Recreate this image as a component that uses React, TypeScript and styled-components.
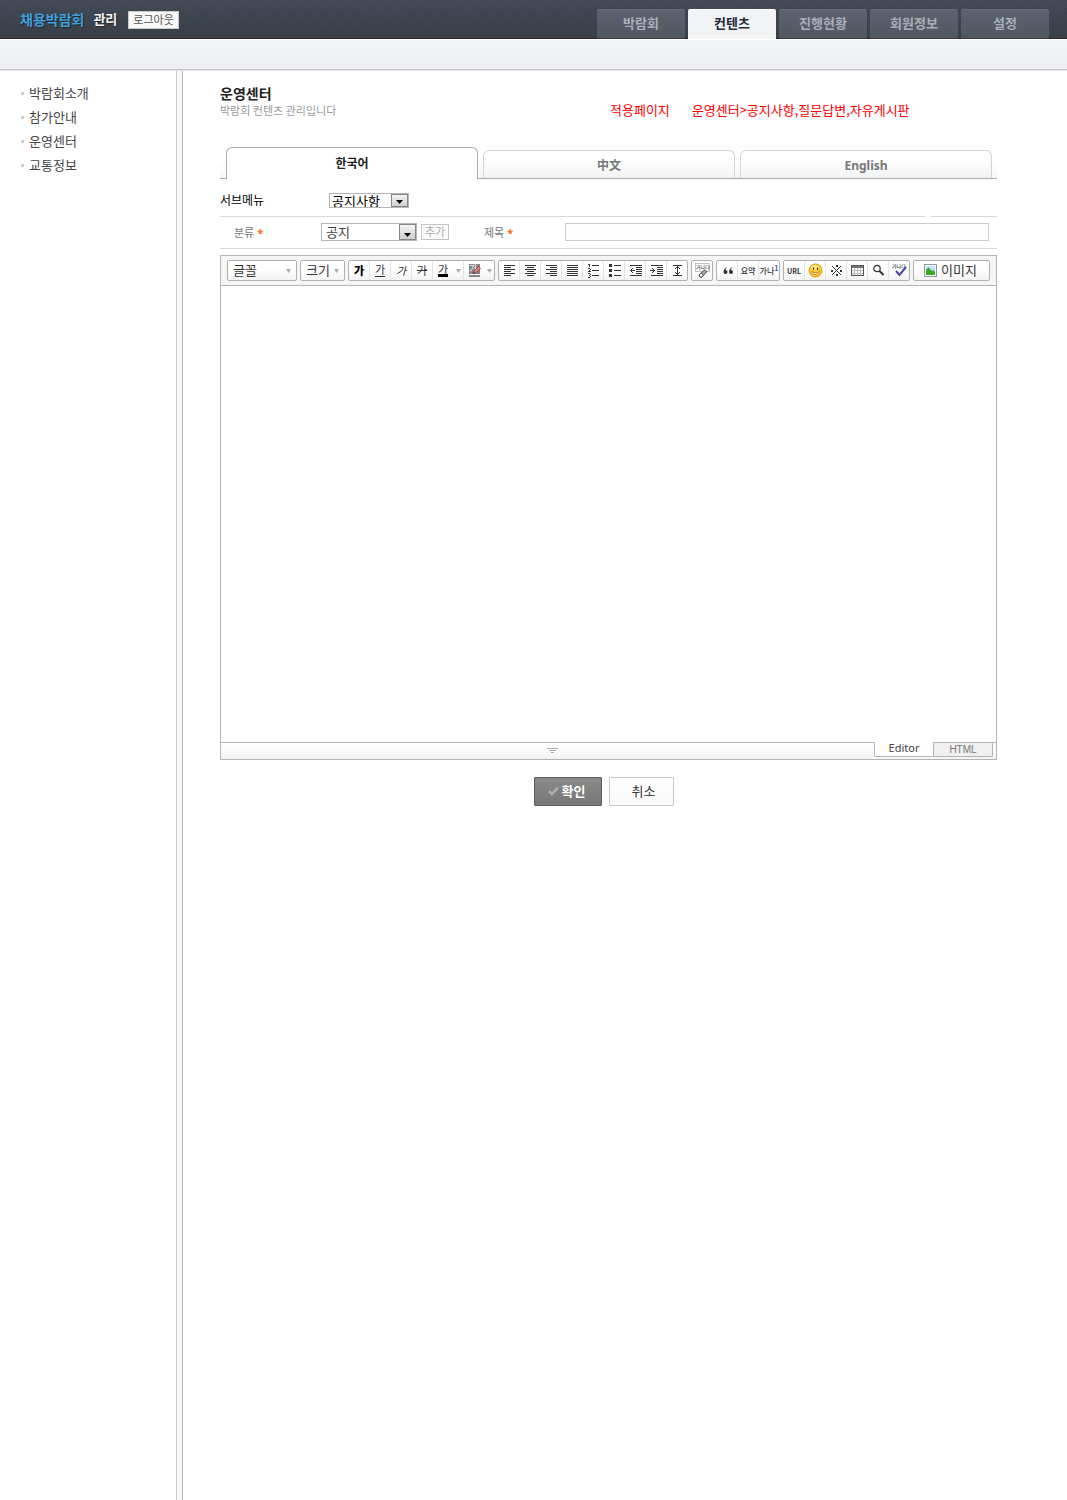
import React, { useState } from "react";
import styled, { createGlobalStyle, css } from "styled-components";

const GlobalStyle = createGlobalStyle`
  *, *::before, *::after { box-sizing: border-box; }
  body {
    margin: 0;
    background: #fff;
    color: #444;
    font-family: "Noto Sans CJK KR", sans-serif;
    font-size: 13px;
    line-height: 16px;
  }
  button, select, input, textarea { font: inherit; color: inherit; margin: 0; padding: 0; }
  ul { list-style: none; margin: 0; padding: 0; }
  h1, h2, p { margin: 0; }
`;

const Page = styled.div`
  display: flex;
  flex-direction: column;
  min-height: 100vh;
`;

const Header = styled.header`
  display: flex;
  justify-content: space-between;
  height: 39px;
  padding: 0 18px 0 20px;
  background:
    repeating-linear-gradient(45deg, rgba(0, 0, 0, 0.05) 0 1px, transparent 1px 3px),
    linear-gradient(#434b57, #3b4049);
  border-bottom: 1px solid #2b292c;
`;

const Brand = styled.div`
  display: flex;
  align-items: center;
  gap: 8px;
  height: 39px;
`;

const Logo = styled.h1`
  padding-bottom: 2px;
  font-size: 14px;
  font-weight: 700;
  line-height: 20px;
  color: #3f9fdc;
  text-shadow: 1px 1px 1px #22262d;
  display: flex;
  gap: 9px;
`;

const LogoSuffix = styled.span`
  font-size: 13px;
  color: #f2f2f2;
`;

const LogoutButton = styled.button`
  height: 18px;
  margin-left: 3px;
  padding: 0 4px 1px;
  font-size: 11px;
  line-height: 15px;
  color: #555;
  background: #f8f8f8;
  border: 1px solid #c9c9c9;
`;

const MainNav = styled.nav`
  display: flex;
  align-items: flex-end;
  gap: 3px;
  height: 39px;
`;

const NavTab = styled.a<{ $active?: boolean }>`
  width: 88px;
  height: 30px;
  padding-top: 5px;
  text-align: center;
  text-decoration: none;
  font-weight: 700;
  border-radius: 2px 2px 0 0;
  ${({ $active }) =>
    $active
      ? css`
          color: #1f2a3d;
          background: #f2f3f5;
          border-top: 1px solid #fff;
        `
      : css`
          color: #a9afba;
          background: linear-gradient(#5c636f, #505761);
          border-top: 1px solid #666d78;
          border-bottom: 1px solid #3a3d44;
        `}
`;

const SubBar = styled.div`
  height: 32px;
  background: linear-gradient(#f3f4f5, #edeef3);
  border-bottom: 1px solid #e2e2e6;
  box-shadow: inset 0 1px 0 #fff, inset 0 -1px 0 #c4c5cb;
`;

const Body = styled.div`
  display: flex;
  flex: 1;
`;

const Sidebar = styled.nav`
  flex: none;
  width: 183px;
  padding: 10px 0 0 21px;
  border-right: 1px solid #b5b5b5;
  background: linear-gradient(90deg, #ccc 1px, #f8f8f8 1px) right / 6px 100% no-repeat;
`;

const SideItem = styled.li`
  display: flex;
  align-items: center;
  gap: 5px;
  height: 24px;

  &::before {
    content: "";
    width: 3px;
    height: 3px;
    background: #ccc;
  }

  a { color: #444; text-decoration: none; }
`;

const Main = styled.main`
  flex: 1;
  min-width: 0;
  padding: 13px 70px 40px 37px;
`;

const TitleRow = styled.div`
  display: grid;
  grid-template-columns: 390px 1fr;
  align-items: end;
  height: 34px;
`;

const Title = styled.h2`
  font-size: 14px;
  font-weight: 700;
  line-height: 18px;
  color: #222;
`;

const Subtitle = styled.p`
  font-size: 11px;
  line-height: 16px;
  color: #999;
`;

const AppliedPages = styled.p`
  display: flex;
  gap: 22px;
  color: #f00;
`;

const LanguageTabs = styled.div`
  display: grid;
  grid-template-columns: repeat(3, 1fr);
  align-items: end;
  gap: 5px;
  height: 33px;
  margin-top: 28px;
  padding: 0 5px 0 6px;
  border-bottom: 1px solid #aaa;
  background: linear-gradient(#fff 50%, #f3f4f5);
`;

const LanguageTab = styled.button<{ $active: boolean }>`
  height: 28px;
  padding-top: 3px;
  border: 1px solid #d4d4d4;
  border-bottom: 0;
  border-radius: 6px 6px 0 0;
  background: linear-gradient(#fff 30%, #f2f3f5);
  color: #777;
  font-family: "Noto Sans", "Noto Sans CJK KR", sans-serif;
  font-size: 12px;
  font-weight: 700;
  line-height: 16px;
  ${({ $active }) =>
    $active &&
    css`
      height: 32px;
      margin-bottom: -1px;
      padding-top: 0;
      border-color: #aaa;
      background: #fff;
      color: #222;
    `}
`;

const MenuRow = styled.div`
  display: flex;
  align-items: center;
  height: 37px;
  padding-top: 6px;
`;

const MenuLabel = styled.label`
  width: 109px;
  padding-bottom: 2px;
  font-size: 12px;
  color: #000;
`;

const SelectBox = styled.span<{ $width: number; $small?: boolean }>`
  display: grid;
  grid-template: 100% / 1fr 17px;
  width: ${({ $width }) => $width}px;
  height: ${({ $small }) => ($small ? 15 : 18)}px;
  border: 1px solid #b5b5b5;
  background: #fff;
  color: ${({ $small }) => ($small ? "#000" : "#444")};
`;

const Select = styled.select<{ $indent: number }>`
  appearance: none;
  grid-area: 1 / 1 / 2 / 3;
  align-self: center;
  height: 100%;
  padding: 0 0 0 ${({ $indent }) => $indent}px;
  line-height: 14px;
  border: 0;
  background: transparent;
`;

const SelectArrow = styled.span`
  grid-area: 1 / 2;
  pointer-events: none;
  display: flex;
  align-items: flex-end;
  justify-content: center;
  padding-bottom: 2px;
  border: 1px solid #85868c;
  background: linear-gradient(#f4f4f4, #cfcfcf);
`;

const SplitRule = styled.div`
  display: grid;
  grid-template-columns: 1fr 66px;
  gap: 6px;

  &::before, &::after {
    content: "";
    height: 1px;
    background: #d9d9d9;
  }
`;

const FieldRow = styled.div`
  display: flex;
  align-items: center;
  height: 32px;
  padding: 0 8px 1px 14px;
  border-bottom: 1px solid #d9d9d9;
`;

const FieldLabel = styled.label<{ $width: number }>`
  flex: none;
  width: ${({ $width }) => $width}px;
  font-size: 11px;
  color: #777;
`;

const Required = styled.span`
  margin-left: 3px;
  color: #f60;
  font-family: "Noto Sans", sans-serif;
  font-size: 11px;
  font-weight: 700;
`;

const AddButton = styled.button`
  width: 28px;
  height: 16px;
  margin: 0 35px 0 4px;
  padding-bottom: 1px;
  font-size: 11px;
  line-height: 13px;
  color: #aaa;
  border: 1px solid #c4c4c4;
  background: #fafafa;
`;

const TitleInput = styled.input`
  flex: 1;
  min-width: 0;
  height: 18px;
  padding: 0 4px;
  border: 1px solid #ccc;
  background: #fefefe;
`;

const Editor = styled.section`
  margin-top: 6px;
  border: 1px solid #b5b5b5;
`;

const Toolbar = styled.div`
  display: flex;
  gap: 3px;
  height: 30px;
  padding: 4px 6px;
  background: #f5f5f5;
  border-bottom: 1px solid #b5b5b5;
`;

const Group = styled.div`
  display: flex;
  height: 21px;
  border: 1px solid #b0b0b0;
  border-radius: 2px;
  background: linear-gradient(#fff 40%, #f3f3f3);
`;

const ToolButton = styled.button<{ $width?: number; $plain?: boolean }>`
  display: flex;
  align-items: center;
  justify-content: center;
  width: ${({ $width = 21 }) => $width}px;
  border: 0;
  border-left: 1px solid ${({ $plain }) => ($plain ? "transparent" : "#e4e4e4")};
  background: none;
  color: #333;
  font-size: 11px;
  line-height: 18px;
  white-space: nowrap;

  &:first-child {
    width: ${({ $width = 21 }) => $width - 1}px;
    border-left: 0;
  }
`;

const MenuButton = styled(ToolButton)`
  justify-content: space-between;
  padding: 0 5px;
  font-size: 13px;
`;

const ImageButton = styled(ToolButton)`
  gap: 4px;
  padding-right: 2px;
  font-size: 13px;
`;

const ButtonText = styled.span`
  padding-bottom: 2px;
  line-height: 16px;
`;

const Glyph = styled.span<{ $look: "bold" | "underline" | "italic" | "strike" | "color" }>`
  line-height: 13px;
  ${({ $look }) =>
    ({
      bold: css`font-weight: 900; color: #000;`,
      underline: css`height: 13px; border-bottom: 1px solid #333; line-height: 11px;`,
      italic: css`font-style: italic;`,
      strike: css`text-decoration: line-through;`,
      color: css`height: 13px; border-bottom: 3px solid #000; line-height: 10px;`,
    })[$look]}
`;

const Tiny = styled.span<{ $bold?: boolean }>`
  display: flex;
  font-size: ${({ $bold }) => ($bold ? 7 : 8)}px;
  line-height: 12px;
  font-weight: ${({ $bold }) => ($bold ? 700 : 500)};

  sup { color: #3a55b0; font-size: 7px; line-height: 6px; font-weight: 700; }
`;

const Content = styled.textarea`
  display: block;
  width: 100%;
  height: 456px;
  padding: 8px;
  border: 0;
  resize: none;
  outline: none;
`;

const EditorFooter = styled.div`
  display: flex;
  height: 17px;
  padding-right: 3px;
  border-top: 1px solid #b5b5b5;
  background: linear-gradient(#fff, #f4f4f4);
`;

const ResizeHandle = styled.button`
  display: flex;
  align-items: center;
  justify-content: center;
  flex: 1;
  padding-left: 9px;
  border: 0;
  background: none;
  cursor: ns-resize;
`;

const ModeTab = styled.button<{ $active: boolean }>`
  width: 60px;
  height: 14px;
  border: 1px solid #b5b5b5;
  border-top: 0;
  border-radius: 0 0 2px 2px;
  background: #f0f0f0;
  color: #777;
  font-family: "Liberation Sans", sans-serif;
  font-size: 10px;
  line-height: 13px;

  & + & { margin-left: -1px; }

  ${({ $active }) =>
    $active &&
    css`
      margin-top: -1px;
      padding-bottom: 2px;
      height: 15px;
      background: #fff;
      color: #444;
      font-family: "Noto Sans", sans-serif;
      font-size: 11px;
      line-height: 12px;
    `}
`;

const Actions = styled.div`
  display: flex;
  justify-content: center;
  gap: 7px;
  margin-top: 17px;
  padding-right: 9px;
`;

const ActionButton = styled.button<{ $primary?: boolean }>`
  display: flex;
  align-items: center;
  justify-content: center;
  gap: 3px;
  height: 29px;
  width: ${({ $primary }) => ($primary ? 68 : 65)}px;
  padding: 0 0 2px ${({ $primary }) => ($primary ? 0 : 4)}px;
  padding-right: ${({ $primary }) => ($primary ? 3 : 0)}px;
  border: 1px solid ${({ $primary }) => ($primary ? "#5c5c5c" : "#c9c9c9")};
  border-radius: 1px;
  background: ${({ $primary }) =>
    $primary ? "linear-gradient(#8a8a8a, #777)" : "linear-gradient(#fff, #f9f9f9)"};
  color: ${({ $primary }) => ($primary ? "#fff" : "#333")};
  font-weight: ${({ $primary }) => ($primary ? 700 : 400)};
`;

const Down = ({ color = "#aaa", size = 5 }: { color?: string; size?: number }) => (
  <svg width={size} height="4" viewBox="0 0 10 6" preserveAspectRatio="none" aria-hidden="true">
    <path d="M0 0h10L5 6z" fill={color} />
  </svg>
);

const Icon = ({ children }: { children: React.ReactNode }) => (
  <svg width="15" height="15" viewBox="0 0 15 15" shapeRendering="crispEdges" aria-hidden="true">
    {children}
  </svg>
);

const Lines = ({ d, color = "#333" }: { d: string; color?: string }) => (
  <path d={d} stroke={color} fill="none" />
);

const svgText = { fontFamily: '"Noto Sans CJK KR", sans-serif' };

const EraseColor = () => (
  <Icon>
    <rect x="2" y="1" width="11" height="10" fill="#858585" />
    <text x="2" y="9" fontSize="9" fill="#fff" {...svgText}>가</text>
    <rect x="2" y="12" width="11" height="2" fill="#888" />
    <g shapeRendering="auto">
      <path d="M6 10.500l1-2.500 4.500-4.500 2 2-4.500 4.500z" fill="#e07f7c" stroke="#8f3d3a" strokeWidth=".8" />
      <path d="M6 10.500l.8-1.800 1 1z" fill="#333" />
    </g>
  </Icon>
);

const ALIGN: [string, string][] = [
  ["왼쪽 정렬", "M2 2.500h11M2 4.500h7M2 6.500h11M2 8.500h7M2 10.500h11M2 12.500h7"],
  ["가운데 정렬", "M2 2.500h11M4 4.500h7M2 6.500h11M4 8.500h7M2 10.500h11M4 12.500h7"],
  ["오른쪽 정렬", "M2 2.500h11M6 4.500h7M2 6.500h11M6 8.500h7M2 10.500h11M6 12.500h7"],
  ["양쪽 정렬", "M2 2.500h11M2 4.500h11M2 6.500h11M2 8.500h11M2 10.500h11M2 12.500h11"],
];

const LISTS: [string, string][] = [
  ["번호 목록", "M6 2.500h7M6 7.500h7M6 12.500h7M3.500 1v3M2 1.500h2M2 5.500h2M4 6.500h1M3 7.500h1M2 8.500h3M2 10.500h2M4 11.500h1M3 12.500h1M4 13.500h1M2 14.500h2"],
  ["글머리 목록", "M7 2.500h7M7 7.500h7M7 12.500h7M2 1.500h3M2 2.500h3M2 3.500h3M2 6.500h3M2 7.500h3M2 8.500h3M2 11.500h3M2 12.500h3M2 13.500h3"],
  ["내어쓰기", "M2 2.500h12M8 4.500h6M8 6.500h6M8 8.500h6M8 10.500h6M2 12.500h12M2 7.500h5M3 6.500h1M3 8.500h1M4 5.500h1M4 9.500h1"],
  ["들여쓰기", "M2 2.500h12M8 4.500h6M8 6.500h6M8 8.500h6M8 10.500h6M2 12.500h12M1 7.500h5M4 6.500h1M4 8.500h1M3 5.500h1M3 9.500h1"],
  ["줄간격", "M3 2.500h9M3 12.500h9M7.500 3v9M6 4.500h3M5 5.500h1M9 5.500h1M5 9.500h1M9 9.500h1M6 10.500h3"],
];

const SIDE_MENU = ["박람회소개", "참가안내", "운영센터", "교통정보"];
const NAV = ["박람회", "컨텐츠", "진행현황", "회원정보", "설정"];
const LANGUAGES = ["한국어", "中文", "English"];

export default function App() {
  const [language, setLanguage] = useState("한국어");
  const [mode, setMode] = useState("Editor");

  return (
    <Page>
      <GlobalStyle />
      <Header>
        <Brand>
          <Logo>
            채용박람회 <LogoSuffix>관리</LogoSuffix>
          </Logo>
          <LogoutButton>로그아웃</LogoutButton>
        </Brand>
        <MainNav>
          {NAV.map((name) => (
            <NavTab key={name} href="#" $active={name === "컨텐츠"}>{name}</NavTab>
          ))}
        </MainNav>
      </Header>
      <SubBar />
      <Body>
        <Sidebar>
          <ul>
            {SIDE_MENU.map((name) => (
              <SideItem key={name}><a href="#">{name}</a></SideItem>
            ))}
          </ul>
        </Sidebar>
        <Main>
          <TitleRow>
            <div>
              <Title>운영센터</Title>
              <Subtitle>박람회 컨텐츠 관리입니다</Subtitle>
            </div>
            <AppliedPages>
              <span>적용페이지</span>
              <span>운영센터&gt;공지사항,질문답변,자유게시판</span>
            </AppliedPages>
          </TitleRow>

          <LanguageTabs role="tablist">
            {LANGUAGES.map((name) => (
              <LanguageTab
                key={name}
                role="tab"
                aria-selected={name === language}
                $active={name === language}
                onClick={() => setLanguage(name)}
              >
                {name}
              </LanguageTab>
            ))}
          </LanguageTabs>

          <MenuRow>
            <MenuLabel htmlFor="submenu">서브메뉴</MenuLabel>
            <SelectBox $width={80} $small>
              <Select id="submenu" $indent={2}>
                <option>공지사항</option>
                <option>질문답변</option>
                <option>자유게시판</option>
              </Select>
              <SelectArrow><Down color="#000" size={7} /></SelectArrow>
            </SelectBox>
          </MenuRow>
          <SplitRule />
          <FieldRow>
            <FieldLabel htmlFor="category" $width={87}>분류<Required>*</Required></FieldLabel>
            <SelectBox $width={96}>
              <Select id="category" $indent={4}>
                <option>공지</option>
              </Select>
              <SelectArrow><Down color="#000" size={7} /></SelectArrow>
            </SelectBox>
            <AddButton>추가</AddButton>
            <FieldLabel htmlFor="subject" $width={81}>제목<Required>*</Required></FieldLabel>
            <TitleInput id="subject" type="text" />
          </FieldRow>

          <Editor>
            <Toolbar>
              <Group><MenuButton $width={69}><ButtonText>글꼴</ButtonText><Down /></MenuButton></Group>
              <Group><MenuButton $width={44}><ButtonText>크기</ButtonText><Down /></MenuButton></Group>
              <Group>
                <ToolButton><Glyph $look="bold">가</Glyph></ToolButton>
                <ToolButton><Glyph $look="underline">가</Glyph></ToolButton>
                <ToolButton><Glyph $look="italic">가</Glyph></ToolButton>
                <ToolButton><Glyph $look="strike">가</Glyph></ToolButton>
                <ToolButton><Glyph $look="color">가</Glyph></ToolButton>
                <ToolButton $width={10} $plain aria-label="글자색 선택"><Down /></ToolButton>
                <ToolButton aria-label="배경색"><EraseColor /></ToolButton>
                <ToolButton $width={10} $plain aria-label="배경색 선택"><Down /></ToolButton>
              </Group>
              <Group>
                {[...ALIGN, ...LISTS].map(([label, d]) => (
                  <ToolButton key={label} aria-label={label}><Icon><Lines d={d} /></Icon></ToolButton>
                ))}
              </Group>
              <Group>
                <ToolButton aria-label="서식 지우기">
                  <Icon>
                    <rect x=".5" y=".5" width="14" height="8" fill="#fff" stroke="#c4c4c4" />
                    <text x="1" y="6" fontSize="5" fill="#000" {...svgText}>가나다</text>
                    <g shapeRendering="auto">
                      <path d="M4 12l5.500-5 2.500 1.500-5 5.500h-2z" fill="#aaa" stroke="#333" strokeWidth=".8" />
                      <path d="M4 12l2-2 2.500 2-1.500 2h-2z" fill="#fff" stroke="#333" strokeWidth=".8" />
                    </g>
                  </Icon>
                </ToolButton>
              </Group>
              <Group>
                <ToolButton aria-label="인용구">
                  <Icon>
                    <g fill="#333" shapeRendering="auto">
                      <path d="M7 4c-1.500.6-3.500 2.500-3.500 5a2 2 0 1 0 2-2c0-1 .6-2 1.500-2.500z" />
                      <path d="M12.500 4c-1.500.6-3.500 2.500-3.500 5a2 2 0 1 0 2-2c0-1 .6-2 1.500-2.500z" />
                    </g>
                  </Icon>
                </ToolButton>
                <ToolButton><Tiny>요약</Tiny></ToolButton>
                <ToolButton><Tiny>가나<sup>1</sup></Tiny></ToolButton>
              </Group>
              <Group>
                <ToolButton><Tiny $bold>URL</Tiny></ToolButton>
                <ToolButton aria-label="이모티콘">
                  <svg width="15" height="15" viewBox="0 0 15 15" aria-hidden="true">
                    <circle cx="7.500" cy="7.500" r="6.500" fill="#ffcb2e" stroke="#dd9a12" />
                    <ellipse cx="7" cy="4.500" rx="4" ry="2.500" fill="#ffe684" />
                    <path d="M5.500 4.500v2.500M9.500 4.500v2.500" stroke="#5b3a05" strokeWidth="1.200" />
                    <path d="M3.500 8.500c1 4 7 4 8 0-2 1.500-6 1.500-8 0z" fill="#fff" stroke="#b56d06" strokeWidth=".8" />
                  </svg>
                </ToolButton>
                <ToolButton aria-label="특수문자">
                  <Icon>
                    <g stroke="#333" shapeRendering="auto">
                      <path d="M3 3l9 9M12 3l-9 9" />
                    </g>
                    <path d="M7 2h2v2h-2zM7 11h2v2h-2zM2 7h2v2h-2zM11 7h2v2h-2z" fill="#333" />
                  </Icon>
                </ToolButton>
                <ToolButton aria-label="표">
                  <Icon>
                    <rect x="1" y="2" width="13" height="11" fill="#fff" />
                    <Lines color="#bbb" d="M1 7.500h13M1 10.500h13M4.500 5v8M7.500 5v8M10.500 5v8" />
                    <rect x="1" y="2" width="13" height="3" fill="#777" />
                    <Lines color="#555" d="M1.500 2.500h12v10h-12z" />
                  </Icon>
                </ToolButton>
                <ToolButton aria-label="찾기">
                  <svg width="15" height="15" viewBox="0 0 15 15" aria-hidden="true">
                    <circle cx="6" cy="5.500" r="3.200" fill="#fff" stroke="#333" strokeWidth="1.200" />
                    <path d="M8.500 8l4 4" stroke="#333" strokeWidth="2" />
                  </svg>
                </ToolButton>
                <ToolButton aria-label="맞춤법">
                  <Icon>
                    <text x="0" y="5" fontSize="5" fill="#000" {...svgText}>가나다</text>
                    <path d="M4 8l3.500 4L14 4" fill="none" stroke="#4a45ac" strokeWidth="2" shapeRendering="auto" />
                  </Icon>
                </ToolButton>
              </Group>
              <Group>
                <ImageButton $width={76}>
                  <svg width="13" height="13" viewBox="0 0 13 13" aria-hidden="true">
                    <rect x=".5" y=".5" width="12" height="12" fill="#fff" stroke="#8a9aa5" />
                    <rect x="2" y="2" width="9" height="9" fill="#bfe3fa" />
                    <path d="M2 6l2.500-2.500L8 7l1.500-1L11 8v3H2z" fill="#3ba822" />
                  </svg>
                  <ButtonText>이미지</ButtonText>
                </ImageButton>
              </Group>
            </Toolbar>
            <Content aria-label="내용" />
            <EditorFooter>
              <ResizeHandle aria-label="입력창 크기 조절">
                <svg width="11" height="6" viewBox="0 0 11 6" shapeRendering="crispEdges" aria-hidden="true">
                  <Lines color="#aaa" d="M0 .5h11M2 2.500h7M4 4.500h3" />
                </svg>
              </ResizeHandle>
              {["Editor", "HTML"].map((name) => (
                <ModeTab key={name} $active={name === mode} onClick={() => setMode(name)}>{name}</ModeTab>
              ))}
            </EditorFooter>
          </Editor>

          <Actions>
            <ActionButton $primary>
              <svg width="11" height="10" viewBox="0 0 11 10" aria-hidden="true">
                <path d="M1 5l3 3 6-6.500" fill="none" stroke="#b0b0b0" strokeWidth="2.500" />
              </svg>
              확인
            </ActionButton>
            <ActionButton>취소</ActionButton>
          </Actions>
        </Main>
      </Body>
    </Page>
  );
}
